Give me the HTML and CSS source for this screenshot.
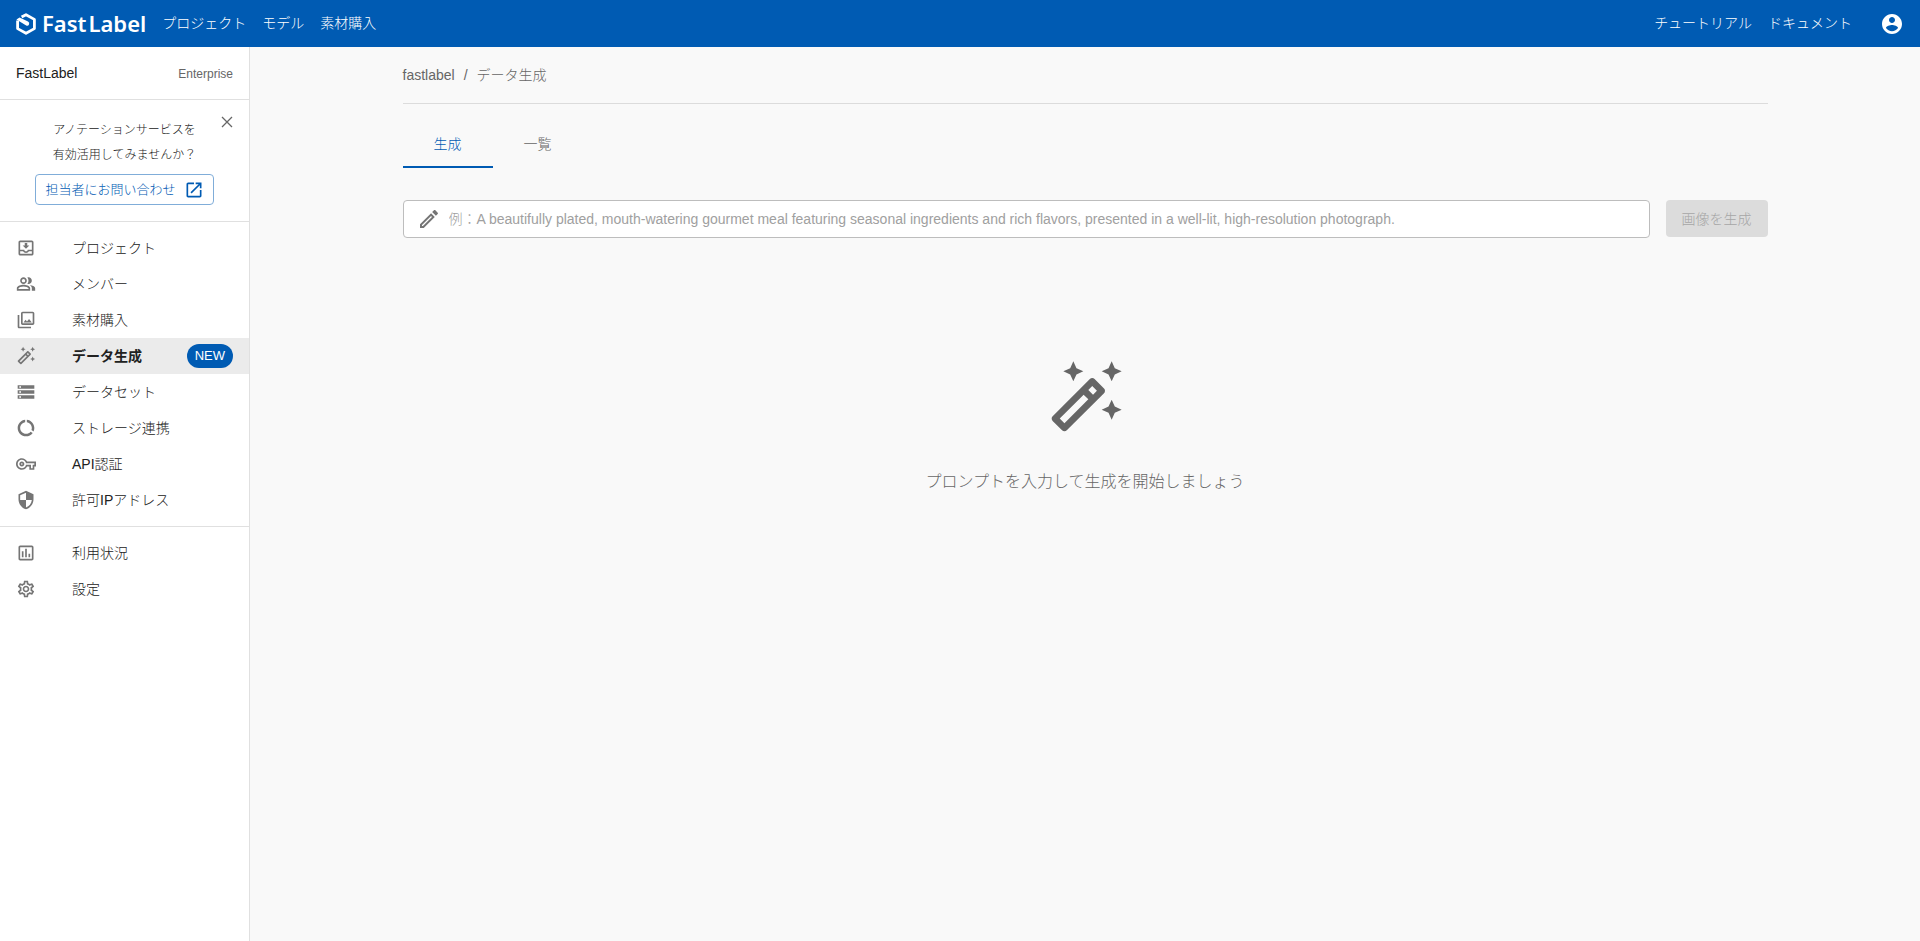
FILE: index.html
```html
<!DOCTYPE html>
<html lang="ja">
<head>
    <meta charset="UTF-8">
    <meta name="viewport" content="width=device-width, initial-scale=1.0">
    <title>データ生成 - FastLabel</title>
    <link rel="stylesheet" href="styles.css">
</head>
<body>
    <header class="header">
        <a href="#" class="logo">
            <svg class="logo-mark" viewBox="0 0 20 22" aria-hidden="true">
                <path d="M1.6 7.4v8.2L10 20.3l8.4-4.7V6.4L10 1.7 5.6 4.1" fill="none" stroke="currentColor" stroke-width="2.8" stroke-linejoin="round"/>
                <path d="M.4 6.6L3.6 4.6 12 8.6a2 2 0 0 1-1.8 3.8z" fill="currentColor"/>
            </svg>
            <span class="logo-text"><span>Fast</span><span>Label</span></span>
        </a>
        <nav class="header-nav">
            <a href="#">プロジェクト</a>
            <a href="#">モデル</a>
            <a href="#">素材購入</a>
        </nav>
        <nav class="header-nav header-right">
            <a href="#">チュートリアル</a>
            <a href="#">ドキュメント</a>
        </nav>
        <button type="button" class="icon-button account" aria-label="アカウント">
            <svg viewBox="0 0 24 24"><path d="M12 2C6.48 2 2 6.48 2 12s4.48 10 10 10 10-4.48 10-10S17.52 2 12 2zm0 3c1.66 0 3 1.34 3 3s-1.34 3-3 3-3-1.34-3-3 1.34-3 3-3zm0 14.2c-2.5 0-4.71-1.28-6-3.22.03-1.99 4-3.08 6-3.08 1.99 0 5.97 1.09 6 3.08-1.29 1.94-3.5 3.22-6 3.22z"/></svg>
        </button>
    </header>

    <div class="layout">
        <aside class="sidebar">
            <div class="workspace">
                <span class="workspace-name">FastLabel</span>
                <span class="workspace-plan">Enterprise</span>
            </div>

            <div class="promo">
                <button type="button" class="icon-button promo-close" aria-label="閉じる">
                    <svg viewBox="0 0 12 12"><path d="M1 1l10 10M11 1L1 11" fill="none" stroke="currentColor" stroke-width="1.3"/></svg>
                </button>
                <p>アノテーションサービスを<br>有効活用してみませんか？</p>
                <a href="#" class="contact-button">
                    担当者にお問い合わせ
                    <svg viewBox="0 0 24 24"><path d="M19 19H5V5h7V3H5c-1.11 0-2 .9-2 2v14c0 1.1.89 2 2 2h14c1.1 0 2-.9 2-2v-7h-2v7zM14 3v2h3.59l-9.83 9.83 1.41 1.41L19 6.41V10h2V3h-7z"/></svg>
                </a>
            </div>

            <nav class="menu">
                <a href="#" class="menu-item">
                    <svg viewBox="0 0 24 24"><path d="M19 3H5c-1.1 0-2 .9-2 2v14c0 1.1.9 2 2 2h14c1.1 0 2-.9 2-2V5c0-1.1-.9-2-2-2zm0 16H5v-3h3.56c.69 1.19 1.97 2 3.45 2s2.75-.81 3.45-2H19v3zm0-5h-4.99c0 1.1-.9 2-2 2s-2-.9-2-2H5V5h14v9zM16 9h-2.5V6h-3v3H8l4 4z"/></svg>
                    <span>プロジェクト</span>
                </a>
                <a href="#" class="menu-item">
                    <svg viewBox="0 0 24 24"><path d="M16.67 13.13C18.04 14.06 19 15.32 19 17v3h4v-3c0-2.18-3.57-3.47-6.33-3.87zM15 12c2.21 0 4-1.79 4-4s-1.79-4-4-4c-.47 0-.91.1-1.33.24C14.5 5.27 15 6.58 15 8s-.5 2.73-1.33 3.76c.42.14.86.24 1.33.24zM9 12c2.21 0 4-1.79 4-4s-1.79-4-4-4-4 1.79-4 4 1.79 4 4 4zm0-6c1.1 0 2 .9 2 2s-.9 2-2 2-2-.9-2-2 .9-2 2-2zm0 7c-2.67 0-8 1.34-8 4v3h16v-3c0-2.66-5.33-4-8-4zm6 5H3v-.99C3.2 16.29 6.3 15 9 15s5.8 1.29 6 2v1z"/></svg>
                    <span>メンバー</span>
                </a>
                <a href="#" class="menu-item">
                    <svg viewBox="0 0 24 24"><path d="M20 4v12H8V4h12m0-2H8c-1.1 0-2 .9-2 2v12c0 1.1.9 2 2 2h12c1.1 0 2-.9 2-2V4c0-1.1-.9-2-2-2zm-8.5 9.67l1.69 2.26 2.48-3.1L19 15H9zM2 6v14c0 1.1.9 2 2 2h14v-2H4V6H2z"/></svg>
                    <span>素材購入</span>
                </a>
                <a href="#" class="menu-item active">
                    <svg viewBox="0 0 24 24"><path d="M20 7l.94-2.06L23 4l-2.06-.94L20 1l-.94 2.06L17 4l2.06.94zM8.5 7l.94-2.06L11.5 4l-2.06-.94L8.5 1l-.94 2.06L5.5 4l2.06.94zM20 12.5l-.94 2.06-2.06.94 2.06.94.94 2.06.94-2.06L23 15.5l-2.06-.94zM17.71 9.12l-2.83-2.83C14.68 6.1 14.43 6 14.17 6c-.26 0-.51.1-.71.29L2.29 17.46c-.39.39-.39 1.02 0 1.41l2.83 2.83c.2.2.45.3.71.3s.51-.1.71-.29l11.17-11.17c.39-.39.39-1.03 0-1.42zm-3.54-.7l1.41 1.41L14.41 11 13 9.59l1.17-1.17zM5.83 19.59l-1.41-1.41L11.59 11 13 12.41l-7.17 7.18z"/></svg>
                    <span>データ生成</span>
                    <span class="badge">NEW</span>
                </a>
                <a href="#" class="menu-item">
                    <svg viewBox="0 0 24 24"><path d="M2 20h20v-4H2v4zm2-3h2v2H4v-2zM2 4v4h20V4H2zm4 3H4V5h2v2zm-4 7h20v-4H2v4zm2-3h2v2H4v-2z"/></svg>
                    <span>データセット</span>
                </a>
                <a href="#" class="menu-item">
                    <svg viewBox="0 0 24 24"><path d="M13 2.05v3.03c3.39.49 6 3.39 6 6.92 0 .9-.18 1.75-.48 2.54l2.6 1.53c.56-1.24.88-2.62.88-4.07 0-5.18-3.95-9.45-9-9.95zM12 19c-3.87 0-7-3.13-7-7 0-3.53 2.61-6.43 6-6.92V2.05c-5.06.5-9 4.76-9 9.95 0 5.52 4.47 10 9.99 10 3.31 0 6.24-1.61 8.06-4.09l-2.6-1.53C16.17 17.98 14.21 19 12 19z"/></svg>
                    <span>ストレージ連携</span>
                </a>
                <a href="#" class="menu-item">
                    <svg viewBox="0 0 24 24"><path d="M22 19h-6v-4h-2.68c-1.14 2.42-3.6 4-6.32 4-3.86 0-7-3.14-7-7s3.14-7 7-7c2.72 0 5.17 1.58 6.32 4H24v6h-2v4zm-4-2h2v-4h2v-2H11.94l-.23-.67C11.01 8.34 9.11 7 7 7c-2.76 0-5 2.24-5 5s2.24 5 5 5c2.11 0 4.01-1.34 4.71-3.33l.23-.67H18v4zM7 15c-1.65 0-3-1.35-3-3s1.35-3 3-3 3 1.35 3 3-1.35 3-3 3zm0-4c-.55 0-1 .45-1 1s.45 1 1 1 1-.45 1-1-.45-1-1-1z"/></svg>
                    <span>API認証</span>
                </a>
                <a href="#" class="menu-item">
                    <svg viewBox="0 0 24 24"><path d="M12 1L3 5v6c0 5.55 3.84 10.74 9 12 5.16-1.26 9-6.45 9-12V5l-9-4zm0 10.99h7c-.53 4.12-3.28 7.79-7 8.94V12H5V6.3l7-3.11v8.8z"/></svg>
                    <span>許可IPアドレス</span>
                </a>
            </nav>

            <nav class="menu">
                <a href="#" class="menu-item">
                    <svg viewBox="0 0 24 24"><path d="M19 3H5c-1.1 0-2 .9-2 2v14c0 1.1.9 2 2 2h14c1.1 0 2-.9 2-2V5c0-1.1-.9-2-2-2zm0 16H5V5h14v14zM7 10h2v7H7zm4-3h2v10h-2zm4 6h2v4h-2z"/></svg>
                    <span>利用状況</span>
                </a>
                <a href="#" class="menu-item">
                    <svg viewBox="0 0 24 24"><path d="M19.43 12.98c.04-.32.07-.64.07-.98 0-.34-.03-.66-.07-.98l2.11-1.65c.19-.15.24-.42.12-.64l-2-3.46c-.09-.16-.26-.25-.44-.25-.06 0-.12.01-.17.03l-2.49 1c-.52-.4-1.08-.73-1.69-.98l-.38-2.65C14.46 2.18 14.25 2 14 2h-4c-.25 0-.46.18-.49.42l-.38 2.65c-.61.25-1.17.59-1.69.98l-2.49-1c-.06-.02-.12-.03-.18-.03-.17 0-.34.09-.43.25l-2 3.46c-.13.22-.07.49.12.64l2.11 1.65c-.04.32-.07.65-.07.98 0 .33.03.66.07.98l-2.11 1.65c-.19.15-.24.42-.12.64l2 3.46c.09.16.26.25.44.25.06 0 .12-.01.17-.03l2.49-1c.52.4 1.08.73 1.69.98l.38 2.65c.03.24.24.42.49.42h4c.25 0 .46-.18.49-.42l.38-2.65c.61-.25 1.17-.59 1.69-.98l2.49 1c.06.02.12.03.18.03.17 0 .34-.09.43-.25l2-3.46c.12-.22.07-.49-.12-.64l-2.11-1.65zm-1.98-1.71c.04.31.05.52.05.73 0 .21-.02.43-.05.73l-.14 1.13.89.7 1.08.84-.7 1.21-1.27-.51-1.04-.42-.9.68c-.43.32-.84.56-1.25.73l-1.06.43-.16 1.13-.2 1.35h-1.4l-.19-1.35-.16-1.13-1.06-.43c-.43-.18-.83-.41-1.23-.71l-.91-.7-1.06.43-1.27.51-.7-1.21 1.08-.84.89-.7-.14-1.13c-.03-.31-.05-.54-.05-.74s.02-.43.05-.73l.14-1.13-.89-.7-1.08-.84.7-1.21 1.27.51 1.04.42.9-.68c.43-.32.84-.56 1.25-.73l1.06-.43.16-1.13.2-1.35h1.39l.19 1.35.16 1.13 1.06.43c.43.18.83.41 1.23.71l.91.7 1.06-.43 1.27-.51.7 1.21-1.07.85-.89.7.14 1.13zM12 8c-2.21 0-4 1.79-4 4s1.79 4 4 4 4-1.79 4-4-1.79-4-4-4zm0 6c-1.1 0-2-.9-2-2s.9-2 2-2 2 .9 2 2-.9 2-2 2z"/></svg>
                    <span>設定</span>
                </a>
            </nav>
        </aside>

        <main class="main">
            <div class="container">
                <div class="breadcrumb">
                    <a href="#">fastlabel</a>
                    <span>/</span>
                    <span>データ生成</span>
                </div>

                <div class="tabs" role="tablist">
                    <button type="button" class="tab active" role="tab" aria-selected="true">生成</button>
                    <button type="button" class="tab" role="tab" aria-selected="false">一覧</button>
                </div>

                <form class="prompt-form">
                    <label class="prompt-field">
                        <svg viewBox="0 0 24 24" aria-hidden="true"><path d="M14.06 9.02l.92.92L5.92 19H5v-.92l9.06-9.06M17.66 3c-.25 0-.51.1-.7.29l-1.83 1.83 3.75 3.75 1.83-1.83c.39-.39.39-1.02 0-1.41l-2.34-2.34c-.2-.2-.45-.29-.71-.29zm-3.6 3.19L3 17.25V21h3.75L17.81 9.94l-3.75-3.75z"/></svg>
                        <input type="text" aria-label="プロンプト" placeholder="例：A beautifully plated, mouth-watering gourmet meal featuring seasonal ingredients and rich flavors, presented in a well-lit, high-resolution photograph.">
                    </label>
                    <button type="submit" class="generate-button" disabled>画像を生成</button>
                </form>

                <div class="empty">
                    <svg viewBox="0 0 24 24" aria-hidden="true"><path d="M20 7l.94-2.06L23 4l-2.06-.94L20 1l-.94 2.06L17 4l2.06.94zM8.5 7l.94-2.06L11.5 4l-2.06-.94L8.5 1l-.94 2.06L5.5 4l2.06.94zM20 12.5l-.94 2.06-2.06.94 2.06.94.94 2.06.94-2.06L23 15.5l-2.06-.94zM17.71 9.12l-2.83-2.83C14.68 6.1 14.43 6 14.17 6c-.26 0-.51.1-.71.29L2.29 17.46c-.39.39-.39 1.02 0 1.41l2.83 2.83c.2.2.45.3.71.3s.51-.1.71-.29l11.17-11.17c.39-.39.39-1.03 0-1.42zm-3.54-.7l1.41 1.41L14.41 11 13 9.59l1.17-1.17zM5.83 19.59l-1.41-1.41L11.59 11 13 12.41l-7.17 7.18z"/></svg>
                    <p>プロンプトを入力して生成を開始しましょう</p>
                </div>
            </div>
        </main>
    </div>
</body>
</html>
```
FILE: styles.css
```css
* {
    box-sizing: border-box;
    margin: 0;
    padding: 0;
}
body {
    display: flex;
    flex-direction: column;
    min-height: 100vh;
    font-family: "Liberation Sans", "Noto Sans CJK JP", sans-serif;
    font-size: 14px;
    font-weight: 300;
    line-height: 20px;
    color: #212121;
    background: #f9f9f9;
}
a {
    color: inherit;
    text-decoration: none;
}
button, input {
    font: inherit;
}
button {
    border: none;
    background: none;
    cursor: pointer;
}
svg {
    display: block;
    flex: none;
    fill: currentColor;
}

/* header */
.header {
    display: flex;
    align-items: center;
    height: 47px;
    padding: 0 16px;
    background: #005bb3;
    color: #fff;
}
.logo {
    display: flex;
    align-items: center;
    gap: 6px;
    margin-right: 16px;
}
.logo-mark {
    width: 20px;
    height: 22px;
}
.logo-text {
    display: flex;
    gap: 2px;
    font-family: "Noto Sans", sans-serif;
    font-size: 22px;
    font-weight: 600;
    padding-bottom: 2px;
}
.header-nav {
    display: flex;
    gap: 16px;
    padding-bottom: 2px;
}
.header-right {
    margin-left: auto;
}
.icon-button {
    display: flex;
}
.account {
    margin-left: 28px;
    color: #fff;
}
.account svg {
    width: 24px;
    height: 24px;
}

/* sidebar */
.layout {
    display: flex;
    flex: 1;
}
.sidebar {
    flex: none;
    width: 250px;
    background: #fff;
    border-right: 1px solid #e0e0e0;
}
.workspace {
    display: flex;
    justify-content: space-between;
    align-items: center;
    padding: 16px;
    border-bottom: 1px solid #e0e0e0;
}
.workspace-plan {
    padding-top: 2px;
    font-size: 12px;
    line-height: 18px;
    color: #666;
}
.promo {
    position: relative;
    display: flex;
    flex-direction: column;
    align-items: center;
    gap: 6px;
    padding: 18px 16px 16px;
    border-bottom: 1px solid #e0e0e0;
}
.promo p {
    font-size: 12px;
    line-height: 25px;
    text-align: center;
}
.promo-close {
    position: absolute;
    top: 16px;
    right: 16px;
    color: #666;
}
.promo-close svg {
    width: 12px;
    height: 12px;
}
.contact-button {
    display: flex;
    align-items: center;
    gap: 8px;
    height: 31px;
    padding: 0 9px;
    border: 1px solid #80add9;
    border-radius: 4px;
    font-size: 13px;
    color: #005bb3;
}
.contact-button svg {
    width: 20px;
    height: 20px;
}
.menu {
    padding: 8px 0;
}
.menu + .menu {
    border-top: 1px solid #e0e0e0;
}
.menu-item {
    display: flex;
    align-items: center;
    gap: 36px;
    height: 36px;
    padding: 0 16px;
}
.menu-item svg {
    width: 20px;
    height: 20px;
    color: #757575;
}
.menu-item.active {
    background: #ebebeb;
    font-weight: 700;
}
.badge {
    margin-left: auto;
    padding: 0 8px;
    border-radius: 12px;
    background: #005bb3;
    color: #fff;
    font-size: 13px;
    font-weight: 400;
    line-height: 24px;
}

/* main */
.main {
    flex: 1;
    min-width: 0;
    padding: 0 24px;
}
.container {
    max-width: 1365px;
    margin: 0 auto;
}
.breadcrumb {
    display: flex;
    gap: 9px;
    padding: 18px 0;
    border-bottom: 1px solid #dcdcdc;
    color: #666;
}
.tabs {
    display: flex;
    margin: 16px 0 32px;
}
.tab {
    width: 90px;
    height: 48px;
    padding-top: 2px;
    border-bottom: 2px solid transparent;
    color: #666;
}
.tab.active {
    border-bottom-color: #005bb3;
    color: #005bb3;
}
.prompt-form {
    display: flex;
    gap: 16px;
}
.prompt-field {
    display: flex;
    flex: 1;
    align-items: center;
    gap: 8px;
    height: 38px;
    padding: 0 13px;
    background: #fff;
    border: 1px solid #bdbdbd;
    border-radius: 4px;
}
.prompt-field svg {
    width: 24px;
    height: 24px;
    color: #757575;
}
.prompt-field input {
    flex: 1;
    min-width: 0;
    border: none;
    outline: none;
    background: none;
    color: #212121;
}
.prompt-field input::placeholder {
    color: #a0a0a0;
}
.generate-button {
    height: 37px;
    padding: 0 16px;
    border-radius: 4px;
    background: #dcdcdc;
    color: #a6a6a6;
    cursor: default;
}
.empty {
    display: flex;
    flex-direction: column;
    align-items: center;
    gap: 32px;
    padding: 120px 0;
    color: #666;
}
.empty svg {
    width: 80px;
    height: 80px;
}
.empty p {
    font-size: 16px;
    line-height: 24px;
}
```
